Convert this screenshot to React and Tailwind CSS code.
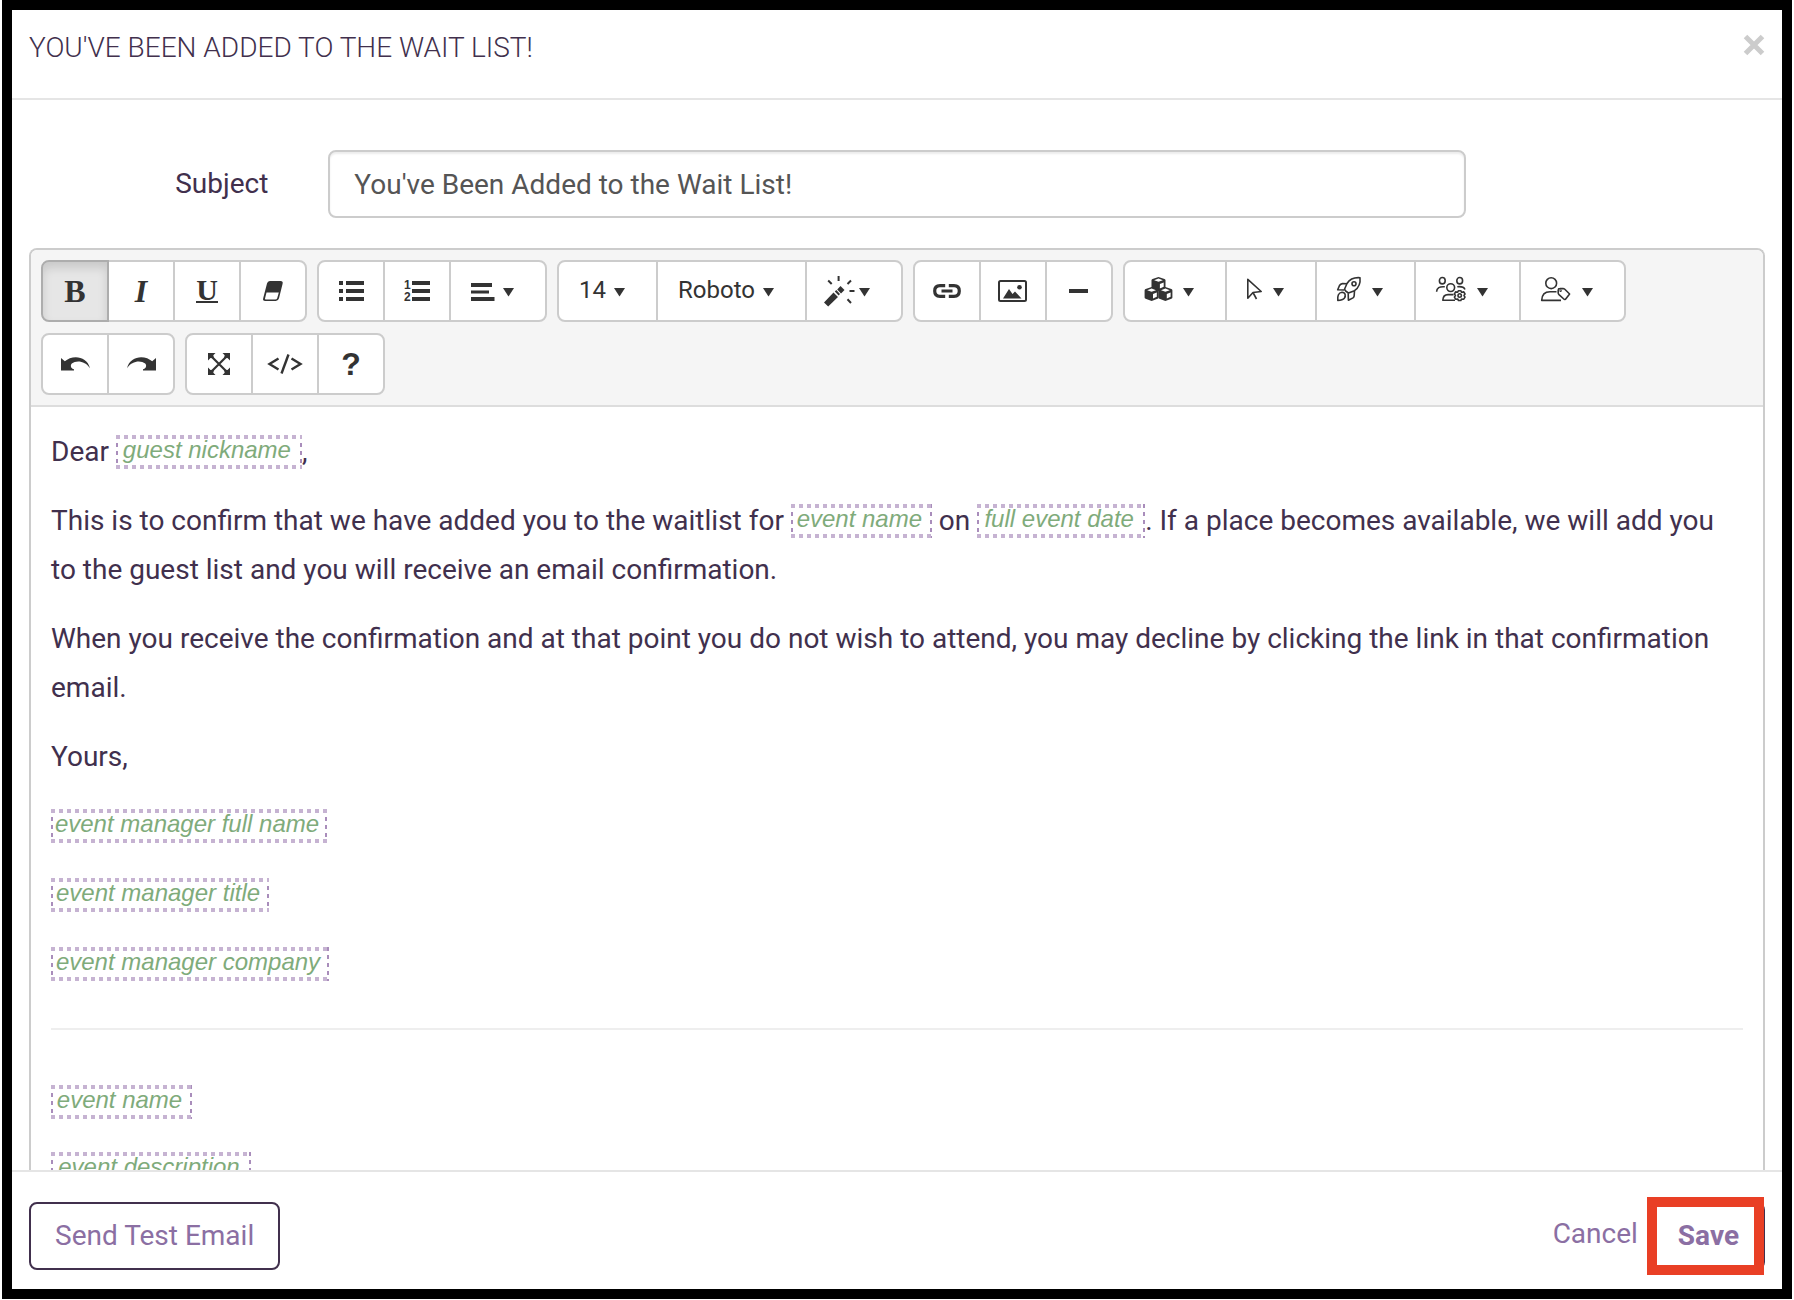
import clsx from "clsx";

function Caret() {
  return (
    <svg width="11" height="28" viewBox="0 0 11 28" fill="currentColor">
      <path d="M0 11h11L5.5 19.5z" />
    </svg>
  );
}

function Glyph({ w, h = 28, line = false, children }) {
  return (
    <svg
      width={w}
      height={h}
      viewBox={`0 0 ${w} ${h}`}
      className="overflow-visible"
      fill={line ? "none" : "currentColor"}
      stroke={line ? "currentColor" : "none"}
      strokeWidth={line ? 1.6 : 0}
      strokeLinejoin="round"
    >
      {children}
    </svg>
  );
}

function Cube({ x, y }) {
  return (
    <g transform={`translate(${x} ${y})`}>
      <path d="M7 0L13 2Q14 2.4 14 3.4V10.4Q14 11.2 13 11.7L7 14L1 11.7Q0 11.2 0 10.4V3.4Q0 2.4 1 2z" />
      <path d="M7 1.6L11.4 3.2L7 4.8L2.6 3.2z" fill="#fff" />
      <path d="M8.4 7L12.2 5.5V9.8L8.4 11.4z" fill="#fff" />
    </g>
  );
}

const icons = {
  eraser: (
    <Glyph w={20} h={20}>
      <path d="M6.8 0H17.5Q20.3 0 19.6 2.8L16 17.3Q15.3 20 12.8 20H2.2Q-.6 20 .2 17.3L4 2.6Q4.6 0 6.8 0zM3.5 11.5L2 17.4Q1.8 18.5 2.8 18.5H12.2Q13.8 18.5 14.2 17.3L15.8 11.5z" />
    </Glyph>
  ),
  ul: (
    <Glyph w={25} h={20}>
      <path d="M0 0h4v4H0zM7 0h18v4H7zM0 8h4v4H0zM7 8h18v4H7zM0 16h4v4H0zM7 16h18v4H7z" />
    </Glyph>
  ),
  ol: (
    <Glyph w={26} h={20}>
      <path d="M8 0h18v4H8zM8 8h18v4H8zM8 16h18v4H8z" />
      <text x="0" y="8" className="font-['Liberation_Sans'] text-[12px] font-bold">1</text>
      <text x="0" y="20" className="font-['Liberation_Sans'] text-[12px] font-bold">2</text>
    </Glyph>
  ),
  align: (
    <Glyph w={28}>
      <path d="M0 6h21v4H0zM0 13.5h18v3H0zM0 20h23.5v4H0z" />
    </Glyph>
  ),
  wand: (
    <Glyph w={28}>
      <path d="M-3 25.5L6.500 15.5L11 20L1.2 29.5zM7.8 14.4L9.3 13L13 16.9L11.6 18.4zM10.2 12.5L13.5 9L17.5 13L14 16.5z" />
      <path
        d="M11.6 -1V4M1.2 3.5L4.7 7M24 3.5L20.5 7M22.5 14h5M20.5 22.3L24 26"
        stroke="currentColor"
        strokeWidth="2"
      />
    </Glyph>
  ),
  link: (
    <Glyph w={28} h={14} line>
      <path d="M12.2 1.7H7Q1.7 1.7 1.7 7T7 12.3H12.2M15.8 1.7H21Q26.3 1.7 26.3 7T21 12.3H15.8M8.5 7h11" strokeWidth="3.2" strokeLinecap="butt" />
    </Glyph>
  ),
  picture: (
    <Glyph w={29} h={22}>
      <rect x="1" y="1" width="27" height="20" rx="1.5" fill="none" stroke="currentColor" strokeWidth="2" />
      <path d="M5 18.5L11 9L14.5 14L17 11.5L23.5 18.5z" />
      <circle cx="21.5" cy="7.3" r="2.3" />
    </Glyph>
  ),
  minus: (
    <Glyph w={19} h={4}>
      <path d="M0 0h19v4H0z" />
    </Glyph>
  ),
  cubes: (
    <Glyph w={34}>
      <Cube x={6.5} y={0} />
      <Cube x={-0.4} y={10} />
      <Cube x={13.4} y={10} />
    </Glyph>
  ),
  cursor: (
    <Glyph w={22} line>
      <path d="M.8 2.3V21.3L6 15.5L14.2 14.5zM6 15.5L9.5 22" />
    </Glyph>
  ),
  rocket: (
    <Glyph w={31} line>
      <path d="M23 .7C16.5 .2 12.5 2.5 10 6.5L7.5 12.3Q8 14 11.5 16L17.5 13.7C21.5 11 23.7 7 23 .7z" />
      <circle cx="17" cy="6.7" r="2" />
      <path d="M10 6.8L5.5 6.6Q3.5 6.8 2.5 8.5L.7 12.8L7.5 13M11.2 16.2L11.4 23.3L16 20.9Q17.2 20 17.2 18.5L17.5 13.8" />
      <path d="M.8 23.4C.3 19 1.5 15.5 5 15.2C8.5 15.2 9 19 7.3 21.2C5.8 23 3.5 23.3 .8 23.4z" />
    </Glyph>
  ),
  usersGear: (
    <Glyph w={37} line>
      <ellipse cx="6.3" cy="3.7" rx="2.9" ry="3.2" />
      <ellipse cx="23.7" cy="3.7" rx="2.9" ry="3.2" />
      <circle cx="14.7" cy="10.6" r="3.9" />
      <path d="M.6 14.8C.6 11 3.5 9.3 8.8 9.8M21.3 9.8C25.5 9.3 28 10.3 29 12.5M19 23.3H6.8C7 19 9 17.6 12 17.6H17.5" />
      <path d="M22.5 13.7L24.9 13.7L25.5 15.2L27.8 14.9L29 17L28 18.5L29 20.2L27.8 22.2L25.5 22L24.9 23.5H22.5L21.7 22L19.6 22.2L18.4 20.2L19.4 18.5L18.4 17L19.6 14.9L21.7 15.2z" />
      <circle cx="23.7" cy="18.5" r="1.7" />
    </Glyph>
  ),
  userTag: (
    <Glyph w={37} line>
      <circle cx="10.2" cy="6.2" r="5.4" />
      <path d="M20 23.4H.7C.9 17.5 3.5 14.8 9 14.8H15.5" />
      <path d="M17.2 13.2Q17.2 11.6 18.8 11.6L22 11.5Q23 11.5 23.8 12.3L28.6 17L24.3 22.4Q23.5 22.8 22.8 22L18 17.6Q17.2 16.8 17.2 16z" />
      <circle cx="19.6" cy="13.7" r=".4" />
    </Glyph>
  ),
  undo: (
    <Glyph w={29} h={14}>
      <path d="M0 1L3.8 4.3C11 -2.5 26 -1.5 29 11.2C24.5 4 15.5 2.8 10.8 6.5C9 8.5 9.8 11.5 13 12.3V13.5H0z" />
    </Glyph>
  ),
  redo: (
    <Glyph w={29} h={14}>
      <path transform="matrix(-1 0 0 1 29 0)" d="M0 1L3.8 4.3C11 -2.5 26 -1.5 29 11.2C24.5 4 15.5 2.8 10.8 6.5C9 8.5 9.8 11.5 13 12.3V13.5H0z" />
    </Glyph>
  ),
  fullscreen: (
    <Glyph w={22} h={22}>
      <path d="M0 0H7.5L5.3 2.2L6 5.3L2.5 5L0 7.5zM22 0V7.5L19.5 5L16 5.3L16.7 2.2L14.5 0zM0 22V14.5L2.5 17L6 16.7L5.3 19.8L7.5 22zM22 22H14.5L16.7 19.8L16 16.7L19.5 17L22 14.5z" />
      <path d="M3 3L19 19M19 3L3 19" stroke="currentColor" strokeWidth="2.2" />
    </Glyph>
  ),
  code: (
    <Glyph w={34} h={20} line>
      <path d="M10.5 4.5L1.5 10L10.5 15.5M23.5 4.5L32.5 10L23.5 15.5" strokeWidth="2.4" strokeLinejoin="miter" />
      <path d="M20.5 .5L13.5 19.5" strokeWidth="2.4" />
    </Glyph>
  ),
};

const serif = "font-['Liberation_Serif',serif] font-bold leading-none";

const rows = [
  [
    [
      { label: "Bold", active: true, content: <span className={clsx(serif, "text-[32px]")}>B</span> },
      { label: "Italic", content: <span className={clsx(serif, "text-[32px] italic")}>I</span> },
      {
        label: "Underline",
        content: (
          <span className={clsx(serif, "flex h-6 items-center border-b-2 border-current text-[30px]")}>U</span>
        ),
      },
      { label: "Remove font style", content: icons.eraser },
    ],
    [
      { label: "Unordered list", content: icons.ul },
      { label: "Ordered list", content: icons.ol },
      { label: "Paragraph", content: icons.align, menu: true },
    ],
    [
      { label: "Font size", content: <span className="mr-1 pb-0.5">14</span>, menu: true },
      { label: "Font family", content: <span className="mr-1 pb-0.5">Roboto</span>, menu: true },
      { label: "Style", content: icons.wand, menu: true },
    ],
    [
      { label: "Link", content: icons.link },
      { label: "Picture", content: icons.picture },
      { label: "Horizontal rule", content: icons.minus },
    ],
    [
      { label: "Blocks", content: icons.cubes, menu: true },
      { label: "Buttons", content: icons.cursor, menu: true },
      { label: "Event fields", content: icons.rocket, menu: true },
      { label: "Manager fields", content: icons.usersGear, menu: true },
      { label: "Guest fields", content: icons.userTag, menu: true },
    ],
  ],
  [
    [
      { label: "Undo", content: icons.undo },
      { label: "Redo", content: icons.redo },
    ],
    [
      { label: "Full screen", content: icons.fullscreen },
      { label: "Code view", content: icons.code },
      {
        label: "Help",
        content: <span className="font-['Liberation_Sans',sans-serif] text-[32px] font-bold leading-none">?</span>,
      },
    ],
  ],
];

function ToolButton({ label, active, menu, content }) {
  return (
    <button
      type="button"
      aria-label={label}
      className={clsx(
        "flex h-[62px] items-center border-2 first:rounded-l-lg last:rounded-r-lg not-first:-ml-0.5",
        menu ? "gap-1 pl-5 pr-[31px]" : "w-[68px] justify-center",
        active
          ? "relative border-[#adadad] bg-[#e6e6e6] shadow-[inset_0_6px_10px_rgba(0,0,0,0.125)]"
          : "border-[#ccc] bg-white"
      )}
    >
      {content}
      {menu && <Caret />}
    </button>
  );
}

// merge field placeholder, replaced with the real value when the email is sent
function Field({ width, children }) {
  return (
    <span
      className={clsx(
        "inline-flex h-[34px] items-center justify-center pr-1 pb-1 align-[3px] font-['Liberation_Sans',sans-serif] text-[24px] italic leading-none whitespace-nowrap text-[#7fab7b]",
        "bg-[linear-gradient(90deg,#c6b3d2_50%,transparent_50%),linear-gradient(90deg,#c6b3d2_50%,transparent_50%),linear-gradient(#a98dbb_50%,transparent_50%),linear-gradient(#a98dbb_50%,transparent_50%)]",
        "bg-size-[8px_4px,8px_4px,2px_8px,2px_8px] bg-position-[0_0,0_100%,0_0,100%_0] [background-repeat:repeat-x,repeat-x,repeat-y,repeat-y]",
        width
      )}
    >
      {children}
    </span>
  );
}

export default function App() {
  return (
    <div className="h-screen bg-white px-0.5 pb-px font-[Roboto,sans-serif] text-[28px] text-[#41304d]">
      <div className="flex h-full flex-col border-10 border-black bg-white">
        <header className="flex h-[90px] shrink-0 items-start justify-between border-b-2 border-[#e5e5e5] px-[17px] pt-[22px]">
          <h1 className="font-light leading-8">YOU'VE BEEN ADDED TO THE WAIT LIST!</h1>
          <button type="button" aria-label="Close" className="mt-0.5 text-[#ccc]">
            <svg width="22" height="22" viewBox="0 0 22 22" stroke="currentColor" strokeWidth="5">
              <path d="M2.5 2.5L19.5 19.5M19.5 2.5L2.5 19.5" />
            </svg>
          </button>
        </header>

        <main className="min-h-0 flex-1 overflow-hidden px-[17px] pt-[50px]">
          <div className="-mx-[30px] grid grid-cols-12 items-center">
            <label htmlFor="subject" className="col-span-2 px-[30px] text-right">
              Subject
            </label>
            <div className="col-span-8 px-[30px]">
              <input
                id="subject"
                type="text"
                defaultValue="You've Been Added to the Wait List!"
                className="block h-[68px] w-full rounded-lg border-2 border-[#ccc] px-6 text-[#555] shadow-[inset_0_2px_2px_rgba(0,0,0,0.075)] outline-none"
              />
            </div>
          </div>

          <div className="mt-[30px] rounded-t-lg border-2 border-b-0 border-[#ccc]">
            <div className="flex flex-col gap-[11px] rounded-t-md border-b-2 border-[#ddd] bg-[#f5f5f5] p-2.5 text-[24px] text-[#333]">
              {rows.map((groups, r) => (
                <div key={r} className="flex gap-2.5">
                  {groups.map((group, g) => (
                    <div key={g} className="flex">
                      {group.map((button) => (
                        <ToolButton key={button.label} {...button} />
                      ))}
                    </div>
                  ))}
                </div>
              ))}
            </div>

            <div className="flex flex-col gap-5 px-5 pt-5 leading-[49px]">
              <p>
                Dear <Field width="w-[186px]">guest nickname</Field>,
              </p>
              <p>
                This is to confirm that we have added you to the waitlist for{" "}
                <Field width="w-[141px]">event name</Field> on <Field width="w-[168px]">full event date</Field>. If a
                place becomes available, we will add you to the guest list and you will receive an email confirmation.
              </p>
              <p>
                When you receive the confirmation and at that point you do not wish to attend, you may decline by
                clicking the link in that confirmation email.
              </p>
              <p>Yours,</p>
              <p>
                <Field width="w-[276px]">event manager full name</Field>
              </p>
              <p>
                <Field width="w-[218px]">event manager title</Field>
              </p>
              <p>
                <Field width="w-[278px]">event manager company</Field>
              </p>
              <hr className="mt-5 mb-[27px] border-t-2 border-[#eee]" />
              <div className="flex flex-col gap-[18px]">
                <p>
                  <Field width="w-[141px]">event name</Field>
                </p>
                <p>
                  <Field width="w-[200px]">event description</Field>
                </p>
              </div>
            </div>
          </div>
        </main>

        <footer className="flex shrink-0 items-center justify-between border-t-2 border-[#e5e5e5] px-[17px] pt-[30px] pb-[19px] text-[#8b6fa3]">
          <button type="button" className="h-[68px] rounded-lg border-2 border-[#41304d] px-6">
            Send Test Email
          </button>
          <div className="flex items-center gap-3.5">
            <button type="button" className="pb-1">
              Cancel
            </button>
            <div className="relative">
              <button type="button" className="h-[68px] rounded-lg border-2 border-[#41304d] px-6 font-bold">
                Save
              </button>
              <div className="pointer-events-none absolute -top-[5px] right-px -bottom-[5px] -left-[5px] border-10 border-[#e93f25]" />
            </div>
          </div>
        </footer>
      </div>
    </div>
  );
}
